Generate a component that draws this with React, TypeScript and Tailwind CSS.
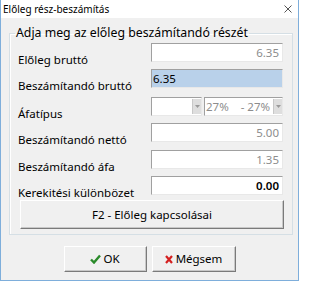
import React from 'react';

const font = { fontFamily: '"Noto Sans", "Open Sans", Arial, sans-serif' };

interface FieldRowProps {
  label: string;
  rowClass: string;
  children: React.ReactNode;
}

const FieldRow: React.FC<FieldRowProps> = ({ label, rowClass, children }) => (
  <div className={`flex items-start ${rowClass}`}>
    <div className="w-[133px] pt-[10px] text-[11.5px] leading-[14px] text-black whitespace-nowrap">{label}</div>
    {children}
  </div>
);

const boxClass =
  'h-[19px] border-t border-l border-t-[#a0a0a0] border-l-[#a0a0a0] border-b border-r border-b-[#e8e8e8] border-r-[#e8e8e8]';

const ReadOnlyBox: React.FC<{ value: string; strong?: boolean }> = ({ value, strong }) => (
  <div
    className={`${boxClass} w-[132px] bg-white flex items-center justify-end pr-[3px] text-[11.5px] ${
      strong ? 'text-black font-semibold' : 'text-[#8d8d8d]'
    }`}
  >
    {value}
  </div>
);

const ComboArrow: React.FC = () => (
  <div className="w-[9px] h-[15px] bg-[#dedede] border-l border-[#c8c8c8] flex items-center justify-center">
    <svg width="5" height="3" viewBox="0 0 5 3">
      <path d="M0 0 L5 0 L2.5 3 Z" fill="#9a9a9a" />
    </svg>
  </div>
);

const App: React.FC = () => {
  return (
    <div className="w-[300px] h-[282px] bg-white" style={font}>
      <div className="w-[299px] h-[281px] flex flex-col border-l border-r border-b border-[#7eaedb] bg-[#f0f0f0]">
        {/* Title bar */}
        <div className="h-[18px] bg-white flex items-center justify-between pl-[2px] pr-[6px]">
          <span className="text-[10px] leading-[12px] text-black">Előleg rész-beszámítás</span>
          <svg width="8" height="8" viewBox="0 0 8 8">
            <path d="M0.5 0.5 L7.5 7.5 M7.5 0.5 L0.5 7.5" stroke="#555" strokeWidth="1" />
          </svg>
        </div>

        {/* Group box */}
        <fieldset className="ml-[8px] mt-[6px] w-[284px] border border-[#d5dfe5] shadow-[inset_1px_1px_0_#fff] pl-[8px] pr-[8px] pb-[5px]">
          <legend className="ml-[-3px] px-[1px] text-[12.3px] leading-[18px] text-black">
            Adja meg az előleg beszámítandó részét
          </legend>

          <div className="flex flex-col mt-[1px]">
            <FieldRow label="Előleg bruttó" rowClass="h-[26px]">
              <ReadOnlyBox value="6.35" />
            </FieldRow>
            <FieldRow label="Beszámítandó bruttó" rowClass="h-[28px]">
              <div className={`${boxClass} w-[132px] bg-[#b9d1ea] flex items-center pl-[1px] text-[11.5px] text-black`}>
                6.35
              </div>
            </FieldRow>
            <FieldRow label="Áfatípus" rowClass="h-[26px]">
              <div className="flex gap-[2px]">
                <div className={`${boxClass} w-[51px] bg-white flex items-center justify-end`}>
                  <ComboArrow />
                </div>
                <div className={`${boxClass} w-[79px] bg-white flex items-center justify-between pl-[1px] text-[11.5px] text-[#8d8d8d]`}>
                  <span className="whitespace-pre">27%    - 27%</span>
                  <ComboArrow />
                </div>
              </div>
            </FieldRow>
            <FieldRow label="Beszámítandó nettó" rowClass="h-[27px]">
              <ReadOnlyBox value="5.00" />
            </FieldRow>
            <FieldRow label="Beszámítandó áfa" rowClass="h-[26px]">
              <ReadOnlyBox value="1.35" />
            </FieldRow>
            <FieldRow label="Kerekitési különbözet" rowClass="h-[24px]">
              <ReadOnlyBox value="0.00" strong />
            </FieldRow>
          </div>

          <button className="ml-[2px] w-[264px] h-[29px] bg-[#f0f0f0] border border-t-white border-l-white border-b-[#7a7a7a] border-r-[#7a7a7a] shadow-[inset_-1px_-1px_0_#c8c8c8] text-[11.5px] text-black">
            F2 - Előleg kapcsolásai
          </button>
        </fieldset>

        {/* Dialog buttons */}
        <div className="flex justify-center gap-[5px] mt-[11px]">
          <button className="w-[83px] h-[26px] bg-[#f0f0f0] border border-t-white border-l-white border-b-[#7a7a7a] border-r-[#7a7a7a] shadow-[inset_-1px_-1px_0_#c8c8c8] flex items-center justify-center gap-[2px] text-[11.5px] text-black">
            <svg width="11" height="10" viewBox="0 0 11 10">
              <path d="M1 5.5 L4 8.5 L10 1.5" stroke="#2a8a2a" strokeWidth="2.4" fill="none" />
            </svg>
            OK
          </button>
          <button className="w-[84px] h-[26px] bg-[#f0f0f0] border border-t-white border-l-white border-b-[#7a7a7a] border-r-[#7a7a7a] shadow-[inset_-1px_-1px_0_#c8c8c8] flex items-center justify-center gap-[3px] text-[11.5px] text-black">
            <svg width="8" height="9" viewBox="0 0 8 9">
              <path d="M1 1 L7 8 M7 1 L1 8" stroke="#d42020" strokeWidth="2.2" />
            </svg>
            Mégsem
          </button>
        </div>
      </div>
    </div>
  );
};

export default App;
